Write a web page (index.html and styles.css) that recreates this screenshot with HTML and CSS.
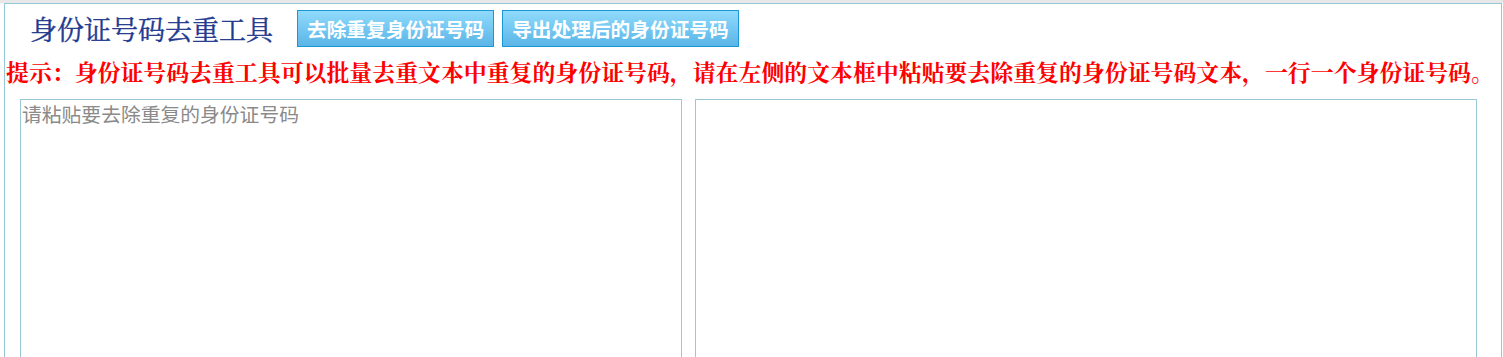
FILE: index.html
```html
<!DOCTYPE html>
<html lang="zh-CN">
<head>
<meta charset="utf-8">
<title>身份证号码去重工具</title>
<link rel="stylesheet" href="styles.css">
</head>
<body>
<div class="topbar"></div>
<div class="panel">
  <div class="header">
    <h1 class="title">身份证号码去重工具</h1>
    <button class="btn" type="button">去除重复身份证号码</button>
    <button class="btn" type="button">导出处理后的身份证号码</button>
  </div>
  <p class="hint">提示：身份证号码去重工具可以批量去重文本中重复的身份证号码，请在左侧的文本框中粘贴要去除重复的身份证号码文本，一行一个身份证号码。</p>
  <div class="editors">
    <textarea class="box box-in" placeholder="请粘贴要去除重复的身份证号码"></textarea>
    <textarea class="box box-out"></textarea>
  </div>
</div>
</body>
</html>
```
FILE: styles.css
```css
html, body {
  margin: 0;
  padding: 0;
  background: #ffffff;
  overflow: hidden;
}
.topbar {
  height: 3px;
  background: #e8e8e8;
}
.panel {
  margin-left: 4px;
  width: 1496px;
  height: 420px;
  border: 1px solid #93c6d6;
  background: #fff;
}
.header {
  display: flex;
  align-items: center;
  padding: 6px 0 0 25px;
  height: 37px;
}
.title {
  margin: 0 24px 0 0;
  font-family: "Noto Serif CJK SC", "Noto Sans CJK SC", serif;
  font-weight: normal;
  font-size: 27px;
  line-height: 37px;
  color: #1f3a8f;
  -webkit-text-stroke: 0.4px #1f3a8f;
}
.btn {
  margin: 0 8px 0 0;
  height: 37px;
  padding: 0 9px;
  border: 1px solid #1b97d5;
  background: linear-gradient(to bottom, #90dafc 0%, #74c8f2 50%, #5ab5e6 100%);
  color: #fff;
  font-family: "Noto Sans CJK SC", sans-serif;
  font-weight: bold;
  font-size: 19.7px;
  line-height: 35px;
  cursor: pointer;
}
.hint {
  margin: 10px 0 0 1px;
  font-family: "Noto Serif CJK SC", "Noto Sans CJK SC", serif;
  font-weight: bold;
  font-size: 22.9px;
  line-height: 30px;
  color: #ff0000;
  white-space: nowrap;
}
.editors {
  display: flex;
  gap: 13px;
  margin-top: 12px;
  padding-left: 15px;
}
.box {
  box-sizing: border-box;
  height: 400px;
  margin: 0;
  padding: 2px 1px;
  border: 1px solid #99c8d6;
  resize: none;
  font-family: "Noto Sans CJK SC", sans-serif;
  font-size: 19.8px;
  line-height: 24px;
  color: #333;
  outline: none;
}
.box::placeholder {
  color: #8a8a8a;
}
.box-in { width: 662px; }
.box-out { width: 782px; }
```
